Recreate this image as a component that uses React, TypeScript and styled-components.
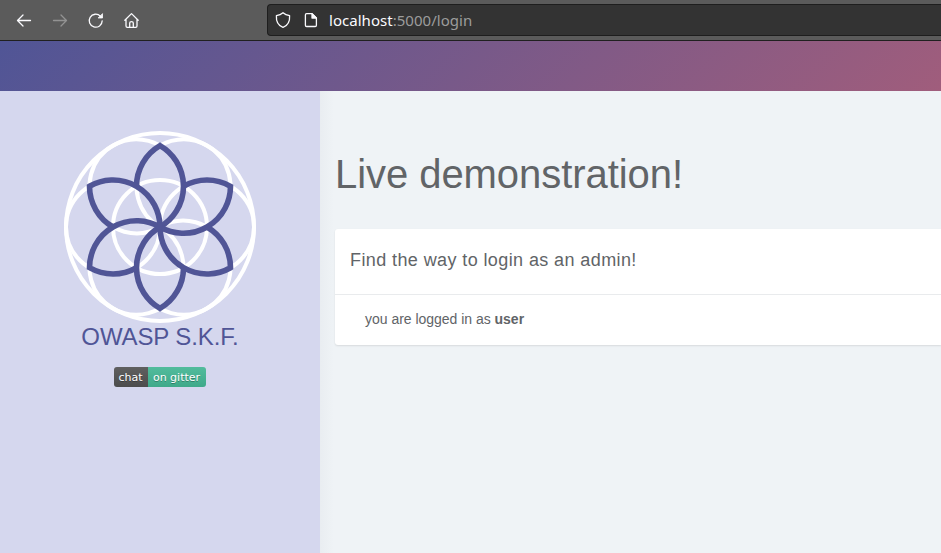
import React from "react";
import styled, { createGlobalStyle } from "styled-components";

const GlobalStyle = createGlobalStyle`
  *, *::before, *::after { box-sizing: border-box; }
  html, body { margin: 0; padding: 0; overflow: hidden; }
  body { font-family: "Liberation Sans", Arial, sans-serif; background: #eff3f6; }
`;

const Page = styled.div`
  display: flex;
  flex-direction: column;
  height: 553px;
  overflow: hidden;
`;

const Toolbar = styled.div`
  flex: none;
  display: flex;
  align-items: center;
  height: 41px;
  padding-left: 15px;
  background: #5b5b5b;
  border-bottom: 1px solid #202020;
`;

const NavButtons = styled.div`
  display: flex;
  gap: 18px;
  width: 252px;
`;

const Icon = styled.svg<{ $dim?: boolean }>`
  display: block;
  flex: none;
  width: 18px;
  height: 18px;
  fill: none;
  stroke: ${(p) => (p.$dim ? "#939393" : "#fbfbfe")};
  stroke-width: 1.3;
  stroke-linecap: round;
  stroke-linejoin: round;
`;

const AddressBar = styled.div`
  flex: 1;
  display: flex;
  align-items: center;
  height: 32px;
  padding-left: 6px;
  background: #333333;
  border: 1px solid #1e1e1e;
  border-right: 0;
  border-radius: 4px 0 0 4px;
`;

const UrlIcons = styled.div`
  display: flex;
  gap: 10px;
  width: 55px;
`;

const Url = styled.div`
  font: 15px/20px "Noto Sans", sans-serif;
  letter-spacing: 0.03px;
  color: #9c9c9c;
  white-space: nowrap;
`;

const Host = styled.span`
  color: #fbfbfe;
`;

const Banner = styled.header`
  flex: none;
  height: 50px;
  background: linear-gradient(135deg, #505596 0%, #a05d7c 100%);
`;

const Body = styled.div`
  flex: 1;
  display: flex;
  min-height: 0;
`;

const Sidebar = styled.aside`
  flex: none;
  display: flex;
  flex-direction: column;
  align-items: center;
  width: 320px;
  padding-top: 39px;
  background: #d5d7ee;
`;

const LogoArt = styled.svg`
  display: block;
  width: 194px;
  height: 194px;
  fill: none;
`;

const Brand = styled.div`
  margin-top: -2px;
  font-size: 24px;
  line-height: 30px;
  letter-spacing: -0.12px;
  color: #505596;
  white-space: nowrap;
`;

const Badge = styled.div`
  display: flex;
  width: 92px;
  height: 20px;
  margin-top: 15px;
  border-radius: 3px;
  overflow: hidden;
  font: 11px/21px "DejaVu Sans", sans-serif;
  color: #fff;
  text-shadow: 0 1px 0 rgba(1, 1, 1, 0.3);
  white-space: nowrap;
`;

const BadgePart = styled.span<{ $color: string; $width: number }>`
  width: ${(p) => p.$width}px;
  padding-right: 1px;
  text-align: center;
  background: linear-gradient(rgba(187, 187, 187, 0.1), rgba(0, 0, 0, 0.1)), ${(p) => p.$color};
`;

const Content = styled.main`
  flex: 1;
  min-width: 0;
  padding: 58px 0 0 15px;
  color: #616467;
  background: linear-gradient(to right, #e9edf1 0, #eff3f6 14px);
`;

const Title = styled.h1`
  margin: 0;
  font-size: 40px;
  font-weight: 400;
  line-height: 50px;
  letter-spacing: -0.06px;
  white-space: nowrap;
`;

const Card = styled.section`
  margin-top: 30px;
  height: 116px;
  background: #fff;
  border-radius: 3px 0 0 3px;
  box-shadow: 0 1px 2px rgba(0, 0, 0, 0.1);
`;

const CardHeading = styled.h2`
  margin: 0;
  height: 66px;
  padding: 20px 15px 0;
  border-bottom: 1px solid #e9ebed;
  font-size: 18px;
  font-weight: 400;
  line-height: 22px;
  letter-spacing: 0.4px;
  white-space: nowrap;
`;

const CardText = styled.p`
  margin: 0;
  padding: 14px 30px 0;
  font-size: 14px;
  line-height: 20px;
  letter-spacing: -0.02px;
  white-space: nowrap;
`;

const turns = [0, 60, 120, 180, 240, 300];

function FlowerLogo() {
  return (
    <LogoArt viewBox="-97 -97 194 194">
      <g stroke="#fff" strokeWidth="4">
        <circle r="94" />
        <circle r="47" />
        {turns.map((a) => (
          <circle key={a} cx="47" r="47" transform={`rotate(${a})`} />
        ))}
      </g>
      <g stroke="#505596" strokeWidth="5.6">
        {turns.map((a) => (
          <path
            key={a}
            d="M-23.5 -40.7A47 47 0 0 1 0 -81.4A47 47 0 0 1 0 0"
            transform={`rotate(${a})`}
          />
        ))}
      </g>
    </LogoArt>
  );
}

export default function App() {
  return (
    <Page>
      <GlobalStyle />
      <Toolbar>
        <NavButtons>
          <Icon viewBox="0 0 18 18"><path d="M15.5 9.5H2.7M8 4L2.5 9.5L8 15" /></Icon>
          <Icon viewBox="0 0 18 18" $dim><path d="M2.5 9.5H15.3M10 4L15.5 9.5L10 15" /></Icon>
          <Icon viewBox="0 0 18 18">
            <path d="M15.2 9.8A6.5 6.5 0 1 1 13.4 5.2" />
            <path d="M15.5 3V7H11.5Z" fill="#fbfbfe" strokeWidth="0.8" />
          </Icon>
          <Icon viewBox="0 0 18 18">
            <path d="M1.8 9.2L8.5 2.6L15.2 9.2M3 8.2V15Q3 16.3 4.3 16.3H12.7Q14 16.3 14 15V8.2M6.7 16V12Q6.7 10.6 8.5 10.6Q10.3 10.6 10.3 12V16" />
          </Icon>
        </NavButtons>
        <AddressBar>
          <UrlIcons>
            <Icon viewBox="0 0 18 18">
              <path d="M9 1.8Q11.5 4 15.6 4.7C16 10.5 13 14.8 9 16.4C5 14.8 2 10.5 2.4 4.7Q6.5 4 9 1.8Z" />
            </Icon>
            <Icon viewBox="0 0 18 18">
              <path d="M4.6 2.7H10L14.4 7V14.3Q14.4 15.5 13.2 15.5H4.6Q3.4 15.5 3.4 14.3V3.9Q3.4 2.7 4.6 2.7Z" />
              <path d="M10 2.7V7H14.3Z" fill="#fbfbfe" />
            </Icon>
          </UrlIcons>
          <Url><Host>localhost</Host>:5000/login</Url>
        </AddressBar>
      </Toolbar>
      <Banner />
      <Body>
        <Sidebar>
          <FlowerLogo />
          <Brand>OWASP S.K.F.</Brand>
          <Badge>
            <BadgePart $color="#555" $width={34}>chat</BadgePart>
            <BadgePart $color="#46bc99" $width={58}>on gitter</BadgePart>
          </Badge>
        </Sidebar>
        <Content>
          <Title>Live demonstration!</Title>
          <Card>
            <CardHeading>Find the way to login as an admin!</CardHeading>
            <CardText>you are logged in as <b>user</b></CardText>
          </Card>
        </Content>
      </Body>
    </Page>
  );
}
